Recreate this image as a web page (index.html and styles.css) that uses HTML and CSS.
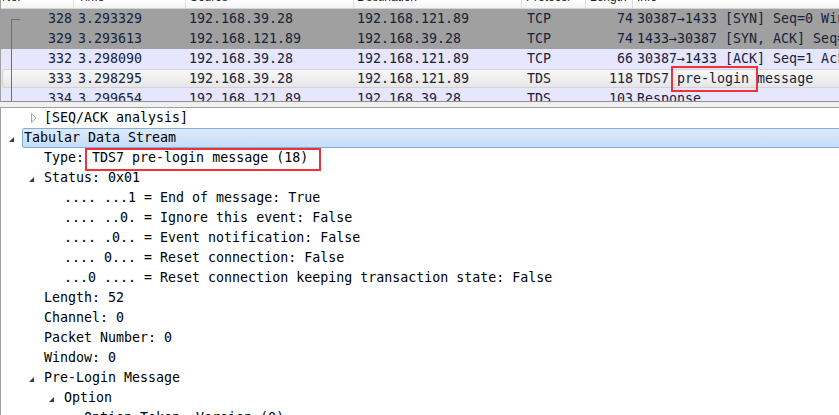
FILE: index.html
```html
<!DOCTYPE html>
<html>
<head>
<meta charset="utf-8">
<link rel="stylesheet" href="styles.css">
</head>
<body>
<div class="app">
  <div class="list">
    <div class="hdr">
      <div class="hc h-no">No.</div>
      <div class="hc h-time">Time</div>
      <div class="hc h-src">Source</div>
      <div class="hc h-dst">Destination</div>
      <div class="hc h-proto">Protocol</div>
      <div class="hc h-len">Length</div>
      <div class="hc h-info">Info</div>
    </div>
    <div class="row gray"><div class="c c-no">328</div><div class="c c-time">3.293329</div><div class="c c-src">192.168.39.28</div><div class="c c-dst">192.168.121.89</div><div class="c c-proto">TCP</div><div class="c c-len">74</div><div class="c c-info">30387→1433 [SYN] Seq=0 Win=8192 Len=0 MSS=1460</div></div>
    <div class="row gray"><div class="c c-no">329</div><div class="c c-time">3.293613</div><div class="c c-src">192.168.121.89</div><div class="c c-dst">192.168.39.28</div><div class="c c-proto">TCP</div><div class="c c-len">74</div><div class="c c-info">1433→30387 [SYN, ACK] Seq=0 Ack=1 Win=8192</div></div>
    <div class="row lav"><div class="c c-no">332</div><div class="c c-time">3.298090</div><div class="c c-src">192.168.39.28</div><div class="c c-dst">192.168.121.89</div><div class="c c-proto">TCP</div><div class="c c-len">66</div><div class="c c-info">30387→1433 [ACK] Seq=1 Ack=1 Win=65536</div></div>
    <div class="row lav hl"><div class="c c-no">333</div><div class="c c-time">3.298295</div><div class="c c-src">192.168.39.28</div><div class="c c-dst">192.168.121.89</div><div class="c c-proto">TDS</div><div class="c c-len">118</div><div class="c c-info">TDS7 <span class="mark mark-pk">pre-login</span> message</div></div>
    <div class="row lav"><div class="c c-no">334</div><div class="c c-time">3.299654</div><div class="c c-src">192.168.121.89</div><div class="c c-dst">192.168.39.28</div><div class="c c-proto">TDS</div><div class="c c-len">103</div><div class="c c-info">Response</div></div>
    <div class="conv"></div>
  </div>
  <div class="split"></div>
  <div class="tree">
    <div class="trow l1"><span class="tog"><svg class="arr-c" width="6" height="10" viewBox="0 0 6 10"><polygon points="0.5,0.5 5,5 0.5,9.5" fill="none" stroke="#a6a6a6" stroke-width="1"/></svg></span><span class="lbl">[SEQ/ACK analysis]</span></div>
    <div class="trow l0"><span class="tog"><svg class="arr-e" width="5" height="5" viewBox="0 0 5 5"><polygon points="5,0 5,5 0,5" fill="#3c3c3c"/></svg></span><span class="lbl sel">Tabular Data Stream</span></div>
    <div class="trow l1"><span class="tog"></span><span class="lbl">Type: <span class="mark mark-dt">TDS7 pre-login message (18)</span></span></div>
    <div class="trow l1"><span class="tog"><svg class="arr-e" width="5" height="5" viewBox="0 0 5 5"><polygon points="5,0 5,5 0,5" fill="#3c3c3c"/></svg></span><span class="lbl">Status: 0x01</span></div>
    <div class="trow l2"><span class="tog"></span><span class="lbl">.... ...1 = End of message: True</span></div>
    <div class="trow l2"><span class="tog"></span><span class="lbl">.... ..0. = Ignore this event: False</span></div>
    <div class="trow l2"><span class="tog"></span><span class="lbl">.... .0.. = Event notification: False</span></div>
    <div class="trow l2"><span class="tog"></span><span class="lbl">.... 0... = Reset connection: False</span></div>
    <div class="trow l2"><span class="tog"></span><span class="lbl">...0 .... = Reset connection keeping transaction state: False</span></div>
    <div class="trow l1"><span class="tog"></span><span class="lbl">Length: 52</span></div>
    <div class="trow l1"><span class="tog"></span><span class="lbl">Channel: 0</span></div>
    <div class="trow l1"><span class="tog"></span><span class="lbl">Packet Number: 0</span></div>
    <div class="trow l1"><span class="tog"></span><span class="lbl">Window: 0</span></div>
    <div class="trow l1"><span class="tog"><svg class="arr-e" width="5" height="5" viewBox="0 0 5 5"><polygon points="5,0 5,5 0,5" fill="#3c3c3c"/></svg></span><span class="lbl">Pre-Login Message</span></div>
    <div class="trow l2"><span class="tog"><svg class="arr-e" width="5" height="5" viewBox="0 0 5 5"><polygon points="5,0 5,5 0,5" fill="#3c3c3c"/></svg></span><span class="lbl">Option</span></div>
    <div class="trow l3"><span class="tog"></span><span class="lbl">Option Token: Version (0)</span></div>
  </div>
</div>
</body>
</html>
```

FILE: styles.css
```css
html, body {
  margin: 0;
  padding: 0;
}
body {
  width: 839px;
  height: 415px;
  overflow: hidden;
  background: #f0f0f0;
  font-family: "DejaVu Sans Mono", "Liberation Mono", monospace;
  font-size: 13.3px;
}
.app {
  display: flex;
  flex-direction: column;
  width: 839px;
  height: 415px;
}

/* packet list */
.list {
  position: relative;
  flex: none;
  height: 102px;
  box-sizing: border-box;
  border-left: 1px solid #a0a0a0;
  border-bottom: 1px solid #8f8f8f;
  background: #fff;
  overflow: hidden;
}
.hdr, .row {
  display: grid;
  grid-template-columns: 73px 112px 168px 168px 64px 47px 1fr;
  white-space: nowrap;
}
.hdr {
  height: 8px;
  overflow: hidden;
  border-bottom: 1px solid #d5d5d5;
  background: linear-gradient(#ffffff, #f3f4f6);
  font-family: "Liberation Sans", Arial, sans-serif;
  font-size: 12px;
  color: #1e1e1e;
}
.hc {
  line-height: 12px;
  margin-top: -9px;
  height: 20px;
  text-align: left;
  border-right: 1px solid #dedede;
}
.h-no { padding-left: 1px; }
.h-time { padding-left: 4px; }
.h-src { padding-left: 4px; }
.h-dst { padding-left: 3px; }
.h-proto { padding-left: 4px; }
.h-len { padding-left: 4px; }
.h-info { padding-left: 4px; border-right: none; }

.row {
  position: relative;
  height: 20px;
  line-height: 20px;
  color: #16233a;
}
.row.gray { background: #a0a0a0; }
.row.lav { background: #e7e6ff; }
.row.hl::before {
  content: "";
  position: absolute;
  left: 1px;
  right: -6px;
  top: 0;
  bottom: 1px;
  border: 1px solid #d3d3d3;
  border-radius: 3px;
  background: linear-gradient(#f8f8f8, #e6e6e6);
}
.c {
  position: relative;
  min-width: 0;
}
.c-no { text-align: right; padding-right: 2px; }
.c-time { padding-left: 4px; }
.c-src { padding-left: 3px; }
.c-dst { padding-left: 3px; }
.c-proto { padding-left: 5px; }
.c-len { text-align: right; padding-right: 0; }
.c-info { padding-left: 4px; overflow: visible; }
.row.hl .c-info { z-index: 3; }

.mark {
  position: relative;
  display: inline-block;
  height: 20px;
  z-index: 3;
}
.mark::after {
  content: "";
  position: absolute;
  border: 2px solid #ee3237;
}
.mark-pk::after {
  left: -6px;
  right: -9px;
  top: -3px;
  bottom: -3px;
}
.mark-dt::after {
  left: -7px;
  right: -13px;
  top: 0;
  bottom: -3px;
}

.conv {
  position: absolute;
  z-index: 2;
  left: 10px;
  top: 19px;
  width: 8px;
  height: 100px;
  border-left: 1px solid #6f6f6f;
  border-top: 1px solid #6f6f6f;
}

.split {
  flex: none;
  height: 5px;
  background: #f0f0f0;
}

/* detail tree */
.tree {
  flex: 1;
  min-height: 0;
  overflow: hidden;
  box-sizing: border-box;
  border-top: 1px solid #a0a0a0;
  border-left: 1px solid #a0a0a0;
  background: #fff;
  color: #000;
}
.trow {
  display: flex;
  height: 20px;
  line-height: 20px;
  white-space: pre;
}
.l0 { padding-left: 3px; }
.l1 { padding-left: 23px; }
.l2 { padding-left: 43px; }
.l3 { padding-left: 63px; }
.tog {
  flex: none;
  width: 20px;
  height: 20px;
}
.tog svg { display: block; }
.arr-e { margin: 9px 0 0 5px; }
.arr-c { margin: 5px 0 0 7px; }
.lbl { flex: none; }
.lbl.sel {
  flex: 1;
  margin-left: -2px;
  margin-right: -6px;
  padding-left: 1px;
  line-height: 18px;
  border: 1px solid #84acdd;
  border-radius: 2px;
  background: linear-gradient(#dcebfc, #c6ddfa);
}
```
